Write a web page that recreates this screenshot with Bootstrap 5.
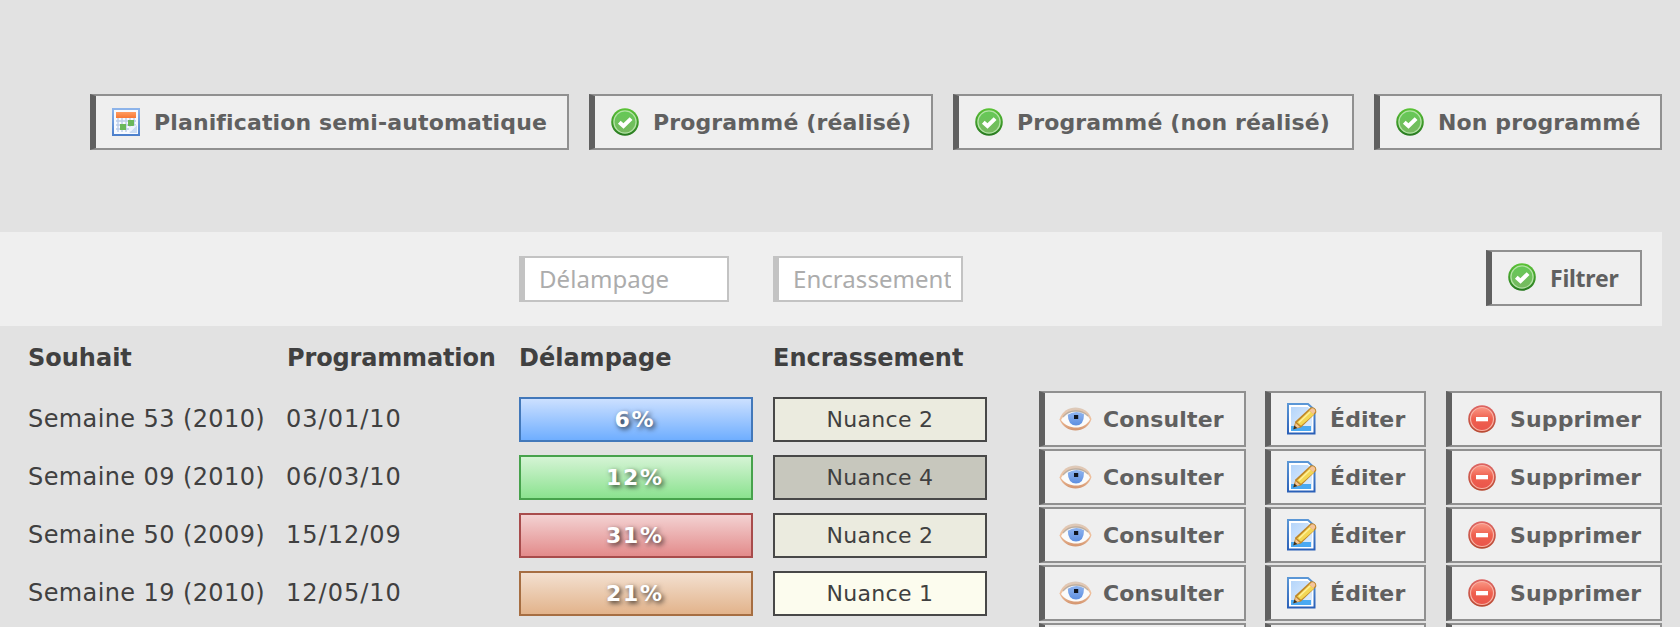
<!DOCTYPE html>
<html lang="fr">
<head>
<meta charset="utf-8">
<meta name="viewport" content="width=device-width, initial-scale=1">
<title>Planification</title>
<link href="https://cdn.jsdelivr.net/npm/bootstrap@5.3.0/dist/css/bootstrap.min.css" rel="stylesheet">
<style>
body{background:#e2e2e2;color:#404040;font-family:"DejaVu Sans",sans-serif;font-size:24px;line-height:28px;height:627px;overflow:hidden}
.toolbar{padding:94px 18px 0 0;gap:20px}
.tool{display:flex;align-items:center;width:100%;height:56px;padding:1px 0 0 16px;gap:14px;border:2px solid #909090;border-left:6px solid #606060;border-radius:0;background:#efefef;color:#606060;font-size:22px;font-weight:700;line-height:26px;letter-spacing:.13px;white-space:nowrap;text-align:left}
.tool:hover{background:#f6f6f6;border-color:#909090 #909090 #909090 #606060;color:#606060}
.tool svg{flex:none;width:28px;height:28px;margin-top:-1px}
.w-plan{width:479px}.w-done{width:344px}.w-todo{width:401px}.w-none{width:288px}
.filters{margin:82px 18px 0 0;height:94px;background:#efefef}
.grid-line{display:grid;grid-template-columns:259px 232px 254px 266px 226px 181px 216px;padding-left:28px}
.filters .grid-line{height:94px}
.filter-field{height:46px;border:2px solid #c3c3c3;border-left-width:6px;border-radius:0;padding:0 10px 2px 14px;font-family:"Noto Sans",sans-serif;font-size:24px;line-height:30px;background:#fff;letter-spacing:.05px}
.filter-field::placeholder{color:#acacac}
.f-del{width:210px}.f-enc{width:190px}
.w-filter{margin-left:40px;margin-top:-2px}
.w-filter.tool{font-family:"Noto Sans",sans-serif;font-size:23px;letter-spacing:-.25px;width:156px;padding-bottom:2px}
.heads{height:64px;font-weight:700;padding-top:18px}
.heads .prog{letter-spacing:-.15px}
.listing{height:301px;overflow:hidden}
.entry{height:58px;align-items:center;letter-spacing:.4px}
.entry .date{letter-spacing:1px;margin-left:-1px}
.level,.nuance{height:45px;border:2px solid;font-size:22px;line-height:41px;text-align:center}
.level{width:234px;padding-right:2px;color:#fff;font-weight:700;letter-spacing:1.7px;text-shadow:2px 2px 5px rgba(0,0,0,.75)}
.nuance{width:214px;border-color:#484848;letter-spacing:.3px}
.lv-blue{background:linear-gradient(#cce0ff,#6faeff);border-color:#4278ba}
.lv-green{background:linear-gradient(#d5f4d5,#8be28f);border-color:#47a24c}
.lv-red{background:linear-gradient(#f3d2d2,#e38b8b);border-color:#a84c4c}
.lv-orange{background:linear-gradient(#f3e0d0,#e2b38b);border-color:#a66e42}
.n1{background:#fcfcee}.n2{background:#ebebdf}.n4{background:#c7c7bd}
.w-view{width:207px}.w-edit{width:161px}.w-drop{width:216px}
.w-view.tool{padding-left:14px;gap:11px}.w-view svg{width:33px;height:26px}
.w-edit.tool{gap:12px}.w-edit svg{width:31px;height:32px}
</style>
</head>
<body>
<svg width="0" height="0" class="position-absolute" aria-hidden="true">
<defs>
<linearGradient id="okRing" x2="0" y2="1"><stop stop-color="#5cc437"/><stop offset="1" stop-color="#26781f"/></linearGradient>
<linearGradient id="okFace" x2="0" y2="1"><stop stop-color="#64c955"/><stop offset="1" stop-color="#78b961"/></linearGradient>
<linearGradient id="noRing" x2="0" y2="1"><stop stop-color="#de6563"/><stop offset="1" stop-color="#b84a32"/></linearGradient>
<linearGradient id="noFace" x2="0" y2="1"><stop stop-color="#fa9684"/><stop offset=".5" stop-color="#ef604e"/><stop offset="1" stop-color="#ea554b"/></linearGradient>
<linearGradient id="calEdge" x2="0" y2="1"><stop stop-color="#8db4ea"/><stop offset="1" stop-color="#4c80cc"/></linearGradient>
<linearGradient id="calTop" x2="0" y2="1"><stop stop-color="#ff9c62"/><stop offset="1" stop-color="#f87734"/></linearGradient>
<linearGradient id="lid" x2="0" y2="1"><stop stop-color="#dccabb"/><stop offset=".5" stop-color="#f0c09c"/><stop offset="1" stop-color="#d3946e"/></linearGradient>
<linearGradient id="iris" x2="0" y2="1"><stop stop-color="#8fb4ef"/><stop offset="1" stop-color="#5e8fe0"/></linearGradient>
<linearGradient id="pageEdge" x2="0" y2="1"><stop stop-color="#5b97d6"/><stop offset="1" stop-color="#2a60b8"/></linearGradient>
<linearGradient id="pageFill" x2="1" y2="1"><stop stop-color="#b5d5fa"/><stop offset="1" stop-color="#e3effd"/></linearGradient>
<symbol id="ok" viewBox="0 0 28 28"><circle cx="14" cy="14" r="13.8" fill="url(#okRing)"/><circle cx="14" cy="14" r="11.1" fill="url(#okFace)" stroke="#b4e3a6" stroke-width="1.3"/><path d="M8.3 14.2l4.2 3.8 7.6-7.4" fill="none" stroke="#fff" stroke-width="4"/></symbol>
<symbol id="no" viewBox="0 0 28 28"><circle cx="14" cy="14" r="13.8" fill="url(#noRing)"/><circle cx="14" cy="14" r="11.5" fill="url(#noFace)" stroke="#f9b3a6" stroke-width="1.2"/><path d="M8 12h12v4.3H8z" fill="#fff"/></symbol>
<symbol id="cal" viewBox="0 0 28 28"><rect x="1" y="1" width="26" height="26" fill="#f7faff" stroke="url(#calEdge)" stroke-width="2"/><path d="M4 4h20v6H4z" fill="url(#calTop)"/><path d="M6 10v14M10 10v14M14 10v14M18 10v14M22 10v9M4 13h20M4 17h20M4 21h15" stroke="#b9cbe9" stroke-width="1.3"/><path d="M16 12h6v6h-6zM8 16h6v6H8z" fill="#6ab75c"/><path d="M17 25l8-8v8z" fill="#c9dbf4"/><path d="M17 25v-6l8-2z" fill="#eef4fd"/></symbol>
<symbol id="eye" viewBox="0 0 33 26"><path d="M.500 13.500C3 5 10 1.500 16.500 1.500S30 5 32.500 13c-2 7-9 11.500-16 11.500S4 21 .500 13.500z" fill="url(#lid)"/><path d="M2 14C6 7.500 11 5.500 17 5.500S28 7.500 31 13.500C28 19 23 21.500 17 21.500S6 19.500 2 14z" fill="#fbfbfa"/><path d="M8.800 8.800Q17 3.500 25 8.300 25 19.500 17 19.500T8.800 8.800z" fill="url(#iris)"/><path d="M4 11Q9 5 16.500 5T29 10" fill="none" stroke="#9c9994" stroke-width="1.300" opacity=".6"/><path d="M15 9h4.200v4H15z" fill="#10151f"/></symbol>
<symbol id="edit" viewBox="0 0 31 32"><path d="M1 1h20l6.500 6v23.500H1z" fill="#fff" stroke="url(#pageEdge)" stroke-width="2"/><path d="M4 4h17l4 4v20H4z" fill="url(#pageFill)"/><path d="M4 23h20v5H4z" fill="#4aa9f2"/><path d="M6.500 26l1.800-7.500L23.500 4.500c3-1.500 7 2 5.500 5.500L14 24.500z" fill="#c08729"/><path d="M10 19.500L22.500 7.500l4.500 4L14 22.800z" fill="#f3d755"/><path d="M12 19.500l11-10.500" stroke="#fff09a" stroke-width="1.500"/><path d="M22.300 7.500l2.200-2c2-.7 4.200 1.400 3.700 3.200l-1.900 2.500z" fill="#f4c49a"/><path d="M8.500 20l4.500 4-5 1.500z" fill="#f1c798"/><path d="M6.300 26.500l1-4 3 2.600z" fill="#3b3020"/></symbol>
</defs>
</svg>

<nav class="toolbar d-flex justify-content-end">
<div class="w-plan"><button class="btn tool"><svg><use href="#cal"/></svg>Planification semi-automatique</button></div>
<div class="w-done"><button class="btn tool"><svg><use href="#ok"/></svg>Programmé (réalisé)</button></div>
<div class="w-todo"><button class="btn tool"><svg><use href="#ok"/></svg>Programmé (non réalisé)</button></div>
<div class="w-none"><button class="btn tool"><svg><use href="#ok"/></svg>Non programmé</button></div>
</nav>

<form class="filters" onsubmit="return false">
<div class="grid-line align-items-center">
<span></span><span></span>
<input class="form-control filter-field f-del" placeholder="Délampage" aria-label="Délampage">
<input class="form-control filter-field f-enc" placeholder="Encrassement" aria-label="Encrassement">
<span></span><span></span>
<button class="btn tool w-filter"><svg><use href="#ok"/></svg>Filtrer</button>
</div>
</form>

<main class="listing">
<div class="grid-line heads"><span>Souhait</span><span class="prog">Programmation</span><span>Délampage</span><span>Encrassement</span></div>
<div id="entries"></div>
</main>

<script src="https://cdn.jsdelivr.net/npm/bootstrap@5.3.0/dist/js/bootstrap.bundle.min.js"></script>
<script>
const entries = [
  ["Semaine 53 (2010)", "03/01/10", "6%", "blue", 2],
  ["Semaine 09 (2010)", "06/03/10", "12%", "green", 4],
  ["Semaine 50 (2009)", "15/12/09", "31%", "red", 2],
  ["Semaine 19 (2010)", "12/05/10", "21%", "orange", 1],
  null
];
const tool = (cls, icon, label) => `<button class="btn tool ${cls}"><svg><use href="#${icon}"/></svg>${label}</button>`;
const actions = tool("w-view", "eye", "Consulter") + tool("w-edit", "edit", "Éditer") + tool("w-drop", "no", "Supprimer");
const blankActions = ["w-view", "w-edit", "w-drop"].map(c => `<button class="btn tool ${c}" aria-label="Action"></button>`).join("");
document.getElementById("entries").innerHTML = entries.map(e => e
  ? `<div class="grid-line entry"><span>${e[0]}</span><span class="date">${e[1]}</span><div class="level lv-${e[3]}">${e[2]}</div><div class="nuance n${e[4]}">Nuance ${e[4]}</div>${actions}</div>`
  : `<div class="grid-line entry"><span></span><span></span><span></span><span></span>${blankActions}</div>`).join("");
</script>
</body>
</html>
